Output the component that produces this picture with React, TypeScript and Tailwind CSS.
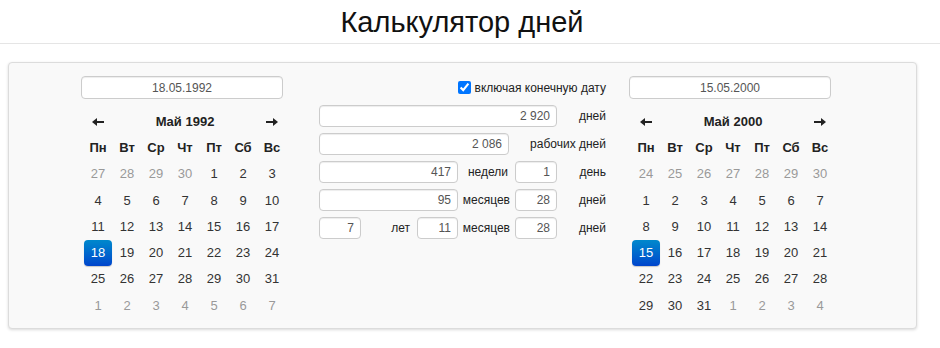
import React from 'react';

type Den = { n: number; chuzhoj?: boolean; vybran?: boolean };

const DNI_NEDELI = ['Пн', 'Вт', 'Ср', 'Чт', 'Пт', 'Сб', 'Вс'];

function sobratMesyac(prevDo: number, prevOt: number, vsegoDnej: number, vybran: number, sledDo: number): Den[] {
  const dni: Den[] = [];
  for (let i = prevOt; i <= prevDo; i++) dni.push({ n: i, chuzhoj: true });
  for (let i = 1; i <= vsegoDnej; i++) dni.push({ n: i, vybran: i === vybran });
  for (let i = 1; i <= sledDo; i++) dni.push({ n: i, chuzhoj: true });
  return dni;
}

function Strelka({ vpravo }: { vpravo?: boolean }) {
  return (
    <svg width="12" height="10" viewBox="0 0 12 10" className={vpravo ? '' : 'rotate-180'}>
      <path d="M0 4h7V1l5 4-5 4V6H0z" fill="#222" />
    </svg>
  );
}

function Kalendar({ data, zagolovok, dni }: { data: string; zagolovok: string; dni: Den[] }) {
  return (
    <div className="w-[205px]">
      <div className="flex h-[23px] w-[202px] items-center justify-center rounded-[4px] border border-[#ccc] bg-white text-[12px] text-[#555] shadow-[inset_0_1px_1px_rgba(0,0,0,0.075)]">
        {data}
      </div>
      <div className="ml-[3px] mt-[9px] grid w-[202px] grid-cols-[repeat(7,28px)] gap-x-[1px]">
        <div className="flex h-[27px] items-center justify-center">
          <Strelka />
        </div>
        <div className="col-span-5 flex h-[27px] items-center justify-center text-[13px] font-bold text-[#222]">
          {zagolovok}
        </div>
        <div className="flex h-[27px] items-center justify-center">
          <Strelka vpravo />
        </div>
        {DNI_NEDELI.map((d) => (
          <div key={d} className="flex h-[26px] items-center justify-center text-[13px] font-bold text-[#222]">
            {d}
          </div>
        ))}
        {dni.map((d, i) => (
          <div
            key={i}
            className={
              'flex h-[26.25px] items-center justify-center text-[13px] ' +
              (d.vybran
                ? 'rounded-[4px] bg-gradient-to-b from-[#0088cc] to-[#0044cc] text-white shadow-[0_1px_1px_rgba(0,0,0,0.2)]'
                : d.chuzhoj
                  ? 'text-[#999]'
                  : 'text-[#333]')
            }
          >
            {d.n}
          </div>
        ))}
      </div>
    </div>
  );
}

function Pole({ znachenie, className = '' }: { znachenie: string; className?: string }) {
  return (
    <div
      className={
        'flex h-[22px] items-center justify-end rounded-[4px] border border-[#ccc] bg-white pr-[6px] text-[12px] text-[#555] shadow-[inset_0_1px_1px_rgba(0,0,0,0.075)] ' +
        className
      }
    >
      {znachenie}
    </div>
  );
}

function Podpis({ tekst, className = '' }: { tekst: string; className?: string }) {
  return (
    <div className={'flex h-[22px] items-center justify-end text-[12px] text-[#222] ' + className}>
      {tekst}
    </div>
  );
}

export default function App() {
  const mai1992 = sobratMesyac(30, 27, 31, 18, 7);
  const mai2000 = sobratMesyac(30, 24, 31, 15, 4);

  return (
    <div className="min-h-[348px] bg-white font-['Liberation_Sans',Arial,sans-serif]">
      <div className="border-b border-[#e5e5e5]">
        <h1 className="flex h-[43px] w-[924px] items-center justify-center pt-[2px] text-[29px] font-normal text-[#111]">
          Калькулятор дней
        </h1>
      </div>
      <div className="ml-2 mt-[18px] w-[909px] rounded-[4px] border border-[#dcdcdc] bg-[#f9f9f9] pb-[9px] pl-[72px] pt-[13px] shadow-[0_1px_3px_rgba(0,0,0,0.15)]">
        <div className="flex">
          <Kalendar data="18.05.1992" zagolovok="Май 1992" dni={mai1992} />

          <div className="ml-[33px] w-[287px]">
            <label className="flex h-[23px] items-center justify-end gap-[4px] text-[12px] text-[#222]">
              <input type="checkbox" defaultChecked className="m-0 h-[13px] w-[13px] accent-[#0075ff]" />
              включая конечную дату
            </label>
            <div className="mt-[6px] grid grid-cols-[42px_56px_41px_57px_42px_49px] gap-y-[6px]">
              <Pole znachenie="2 920" className="col-span-5" />
              <Podpis tekst="дней" />

              <Pole znachenie="2 086" className="col-span-4 mr-[6px]" />
              <Podpis tekst="рабочих дней" className="col-span-2" />

              <Pole znachenie="417" className="col-span-3" />
              <Podpis tekst="недели" className="pr-[7px]" />
              <Pole znachenie="1" />
              <Podpis tekst="день" />

              <Pole znachenie="95" className="col-span-3" />
              <Podpis tekst="месяцев" className="pr-[5px]" />
              <Pole znachenie="28" />
              <Podpis tekst="дней" />

              <Pole znachenie="7" />
              <Podpis tekst="лет" className="pr-[7px]" />
              <Pole znachenie="11" />
              <Podpis tekst="месяцев" className="pr-[5px]" />
              <Pole znachenie="28" />
              <Podpis tekst="дней" />
            </div>
          </div>

          <div className="ml-[23px]">
            <Kalendar data="15.05.2000" zagolovok="Май 2000" dni={mai2000} />
          </div>
        </div>
      </div>
    </div>
  );
}
